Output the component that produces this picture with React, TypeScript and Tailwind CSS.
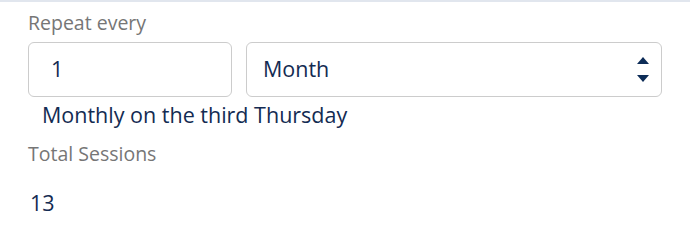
import React from "react";

export default function App() {
  return (
    <div
      className="w-[690px] h-[232px] bg-white border-t-2 border-[#e1e6ee] px-[28px] text-[#132b52]"
      style={{ fontFamily: '"Open Sans", "Noto Sans", sans-serif' }}
    >
      <div className="pt-[7px] text-[19.5px] leading-[28px] text-[#767676]">Repeat every</div>
      <div className="mt-[5px] flex gap-[14px]">
        <div className="w-[204px] h-[55px] border border-[#cccccc] rounded-[6px] flex items-center pl-[22px] text-[21.5px]">
          1
        </div>
        <div className="flex-1 h-[55px] border border-[#cccccc] rounded-[6px] flex items-center justify-between pl-[16px] pr-[12px] text-[21.5px]">
          <span>Month</span>
          <svg width="12" height="26" viewBox="0 0 12 26" className="text-[#0d2c57]">
            <polygon points="6,0 12,7 0,7" fill="currentColor" />
            <polygon points="0,18 12,18 6,25" fill="currentColor" />
          </svg>
        </div>
      </div>
      <div className="mt-[3px] pl-[14px] text-[21.5px] leading-[30px]">Monthly on the third Thursday</div>
      <div className="mt-[10px] text-[19.5px] leading-[28px] text-[#767676]">Total Sessions</div>
      <div className="mt-[20px] pl-[2px] text-[21.5px] leading-[30px]">13</div>
    </div>
  );
}
